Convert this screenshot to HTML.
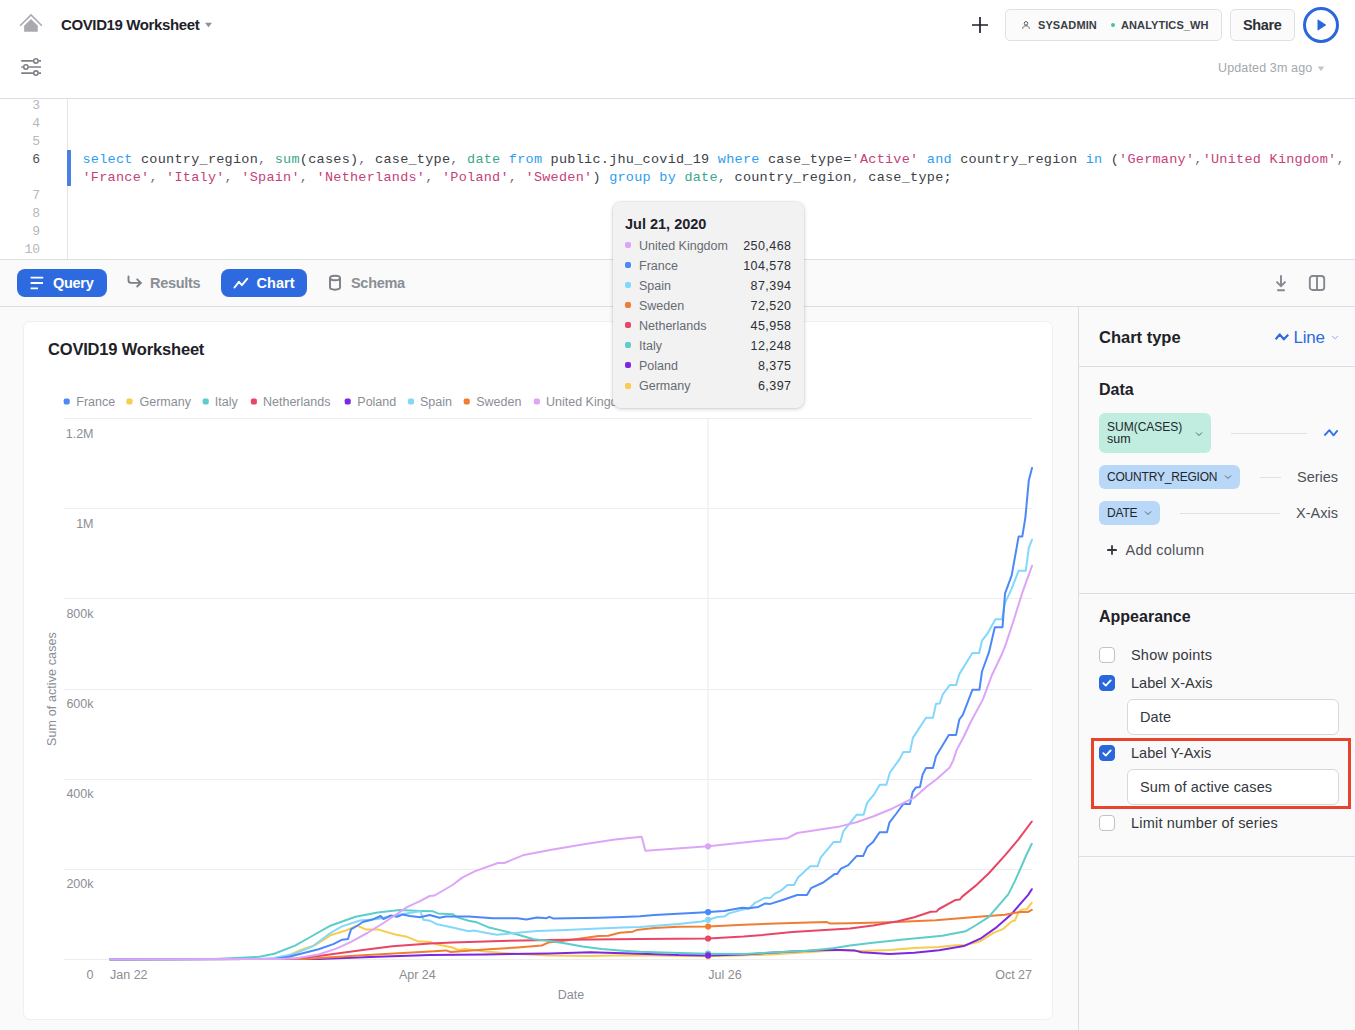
<!DOCTYPE html>
<html lang="en">
<head>
<meta charset="utf-8">
<title>COVID19 Worksheet</title>
<style>
*{box-sizing:border-box;margin:0;padding:0}
html,body{width:1355px;height:1030px;overflow:hidden;background:#fff}
body{position:relative;font-family:"Liberation Sans",sans-serif;color:#1f2329;-webkit-font-smoothing:antialiased}
.abs{position:absolute}
.t{position:absolute;white-space:nowrap;line-height:1}
/* header */
#title{left:61px;top:17px;font-size:15px;font-weight:700;color:#1e2228;letter-spacing:-.38px}
#ctx{left:1005px;top:9px;width:217px;height:32px;border:1px solid #dfe1e5;border-radius:5px;background:#fbfbfb}
#share{left:1230px;top:9px;width:65px;height:32px;border:1px solid #dfe1e5;border-radius:5px;background:#fbfbfb}
#run{left:1303px;top:7px;width:36px;height:36px;border:3px solid #2a67dc;border-radius:50%}
#hdrline{left:0;top:98px;width:1355px;height:1px;background:#dcdee2}
/* editor */
.ln{position:absolute;width:40px;left:0;text-align:right;font-family:"Liberation Mono",monospace;font-size:13px;color:#b4b8c0;line-height:18px}
.code{position:absolute;left:82.5px;font-family:"Liberation Mono",monospace;font-size:13.5px;letter-spacing:.2576px;line-height:18px;white-space:pre;color:#3d4149}
.k{color:#2f9df0}.f{color:#3ba88a}.s{color:#c6417a}.p{color:#6c7380}
/* tabs */
#tabbar{left:0;top:259px;width:1355px;height:48px;background:#fafafa;border-top:1px solid #dcdee2;border-bottom:1px solid #dcdee2}
.tabbtn{position:absolute;top:269px;height:28px;border-radius:8px;background:#2d6ae0}
.tabtxt{position:absolute;top:275.5px;letter-spacing:-.3px;font-size:14.5px;font-weight:700;line-height:1;white-space:nowrap}
/* main */
#main{left:0;top:307px;width:1078px;height:723px;background:#fafafa}
#card{left:23px;top:320.5px;width:1030px;height:699.5px;background:#fff;border-radius:7px;border:1px solid #f0f0f1}
#side{left:1078px;top:307px;width:277px;height:723px;background:#fafafa;border-left:1px solid #dcdee2}
.sh{position:absolute;left:1099px;font-size:16px;font-weight:700;line-height:1;color:#1e2228;white-space:nowrap}
.sline{position:absolute;left:1079px;width:276px;height:1px;background:#dcdee2}
.pill{position:absolute;border-radius:6px;font-size:12.5px;color:#22262c;line-height:1;white-space:nowrap}
.lbl{position:absolute;letter-spacing:.13px;font-size:14.5px;color:#33373e;line-height:1;white-space:nowrap}
.cb{position:absolute;left:1099px;width:16px;height:16px;border-radius:4px;border:1px solid #bfc3c9;background:#fff}
.cb.on{background:#2a67dc;border-color:#2a67dc}
.inp{position:absolute;left:1127px;width:212px;height:36px;border:1px solid #d5d8dc;border-radius:6px;background:#fff}
/* tooltip */
#tip{left:613px;top:201.5px;width:191px;height:206px;background:#f2f2f2;border-radius:8px;box-shadow:0 1px 4px rgba(0,0,0,.18),0 0 0 1px rgba(0,0,0,.04)}
.tr{position:absolute;left:0;width:191px;height:20px;font-size:12.5px;color:#666b73;line-height:20px}
.tr i{position:absolute;left:12px;top:6.3px;width:6px;height:6px;border-radius:2px}
.tr b{position:absolute;left:26px;font-weight:400}
.tr u{position:absolute;right:12.5px;text-decoration:none;color:#2b2f36;letter-spacing:.45px}
</style>
</head>
<body>
<!-- HEADER -->
<svg class="abs" style="left:18px;top:12px" width="26" height="22" viewBox="0 0 26 22"><path d="M2.100 13.700 L13 2.900 L23.900 13.700" fill="none" stroke="#a8aaaf" stroke-width="1.600" stroke-linejoin="miter"/><path d="M13 7 L19.800 13.800 V19.800 H6.100 V13.800 Z" fill="#a8aaaf"/></svg>
<div id="title" class="t">COVID19 Worksheet</div>
<svg class="abs" style="left:204px;top:22px" width="9" height="6" viewBox="0 0 9 6"><path d="M1 0.8h7L4.5 5.2z" fill="#8d9198"/></svg>
<svg class="abs" style="left:20px;top:56px" width="22" height="22" viewBox="0 0 22 22" fill="none" stroke="#7d8087" stroke-width="1.600"><path d="M1.200 4.900h11.700M18.900 4.900h2.100M1.200 11h1.700M8.900 11H21M1.200 17.100h11.700M18.900 17.100h2.100"/><circle cx="15.900" cy="4.900" r="2.200"/><circle cx="5.900" cy="11" r="2.200"/><circle cx="15.900" cy="17.100" r="2.200"/></svg>
<svg class="abs" style="left:971px;top:16px" width="18" height="18" viewBox="0 0 18 18"><path d="M9 1v16M1 9h16" stroke="#1e2228" stroke-width="1.7" fill="none"/></svg>
<div id="ctx" class="abs"></div>
<svg class="abs" style="left:1021px;top:20px" width="10" height="10" viewBox="0 0 12 12" fill="none" stroke="#5b6068" stroke-width="1.2"><circle cx="6" cy="4" r="2.1"/><path d="M2 10.5c.4-2.6 1.9-3.6 4-3.6s3.6 1 4 3.6"/></svg>
<div class="t" style="left:1038px;top:19.5px;font-size:11px;font-weight:700;color:#3a3e46;letter-spacing:.1px">SYSADMIN</div>
<div class="abs" style="left:1111px;top:23px;width:4px;height:4px;border-radius:50%;background:#4cc38f"></div>
<div class="t" style="left:1121px;top:19.5px;font-size:11px;font-weight:700;color:#3a3e46;letter-spacing:.1px">ANALYTICS_WH</div>
<div id="share" class="abs"></div>
<div class="t" style="left:1243px;top:18px;font-size:14.5px;font-weight:700;letter-spacing:-.36px;color:#2b2f36">Share</div>
<div id="run" class="abs"></div>
<svg class="abs" style="left:1316px;top:19px" width="12" height="12" viewBox="0 0 12 12"><path d="M1.5 1.2v9.6c0 .5.5.8.9.5l7.3-4.8c.4-.2.4-.8 0-1L2.4.7c-.4-.3-.9 0-.9.5z" fill="#2a67dc"/></svg>
<div class="t" style="left:1218px;top:62px;font-size:12.5px;letter-spacing:.14px;color:#a3a7ae">Updated 3m ago</div>
<svg class="abs" style="left:1317px;top:65.5px" width="8" height="6" viewBox="0 0 8 6"><path d="M.6.6h6.8L4 5.2z" fill="#c3c6cb"/></svg>
<div id="hdrline" class="abs"></div>

<!-- EDITOR -->
<div class="abs" style="left:67px;top:99px;width:1px;height:160px;background:#e4e5e8"></div>
<div class="ln" style="top:97px">3</div>
<div class="ln" style="top:115px">4</div>
<div class="ln" style="top:133px">5</div>
<div class="ln" style="top:151px;color:#4a4f57">6</div>
<div class="ln" style="top:187px">7</div>
<div class="ln" style="top:205px">8</div>
<div class="ln" style="top:223px">9</div>
<div class="ln" style="top:241px">10</div>
<div class="abs" style="left:67px;top:150px;width:4px;height:36px;background:#4a7fe6"></div>
<div class="code" style="top:151px"><span class="k">select</span> country_region<span class="p">,</span> <span class="f">sum</span>(cases)<span class="p">,</span> case_type<span class="p">,</span> <span class="f">date</span> <span class="k">from</span> public.jhu_covid_19 <span class="k">where</span> case_type=<span class="s">'Active'</span> <span class="k">and</span> country_region <span class="k">in</span> (<span class="s">'Germany'</span><span class="p">,</span><span class="s">'United Kingdom'</span><span class="p">,</span></div>
<div class="code" style="top:169px"><span class="s">'France'</span><span class="p">,</span> <span class="s">'Italy'</span><span class="p">,</span> <span class="s">'Spain'</span><span class="p">,</span> <span class="s">'Netherlands'</span><span class="p">,</span> <span class="s">'Poland'</span><span class="p">,</span> <span class="s">'Sweden'</span>) <span class="k">group by</span> <span class="f">date</span><span class="p">,</span> country_region<span class="p">,</span> case_type;</div>

<!-- TABS -->
<div id="tabbar" class="abs"></div>
<div class="tabbtn" style="left:17px;width:90px"></div>
<svg class="abs" style="left:30px;top:276px" width="14" height="14" viewBox="0 0 14 14"><path d="M.6 1.600h12.600M.6 7h12.400M.6 12.400h7.400" stroke="#fff" stroke-width="1.900"/></svg>
<div class="tabtxt" style="left:53px;color:#fff">Query</div>
<svg class="abs" style="left:127px;top:275px" width="16" height="14" viewBox="0 0 16 14" fill="none" stroke="#7b7f86" stroke-width="1.900" stroke-linecap="round" stroke-linejoin="round"><path d="M1.5 1.5v3.8c0 1.6 1 2.6 2.6 2.6h9.6"/><path d="M10.2 4.3l3.6 3.6-3.6 3.6"/></svg>
<div class="tabtxt" style="left:150px;color:#8a8e95">Results</div>
<div class="tabbtn" style="left:221px;width:86px"></div>
<svg class="abs" style="left:233px;top:276px" width="16" height="14" viewBox="0 0 16 14" fill="none" stroke="#fff" stroke-width="2" stroke-linecap="round" stroke-linejoin="round"><path d="M1.5 11.5l4.4-5.6 3 3.2 5.4-6.4"/></svg>
<div class="tabtxt" style="left:256.5px;color:#fff;letter-spacing:.05px">Chart</div>
<svg class="abs" style="left:328px;top:274px" width="14" height="17" viewBox="0 0 14 17" fill="none" stroke="#7b7f86" stroke-width="1.900"><path d="M2 4v9.600c0 1.200 2.200 2.100 5 2.100s5-.9 5-2.100V4"/><ellipse cx="7" cy="4" rx="5" ry="2.300"/></svg>
<div class="tabtxt" style="left:351px;color:#8a8e95">Schema</div>
<svg class="abs" style="left:1273px;top:274px" width="16" height="18" viewBox="0 0 16 18" fill="none" stroke="#85888f" stroke-width="1.900" stroke-linejoin="miter"><path d="M8 1.200v10.800M3.500 7.700l4.500 4.500 4.500-4.500M4.200 16.300h7.600"/></svg>
<svg class="abs" style="left:1308px;top:274px" width="18" height="18" viewBox="0 0 18 18" fill="none" stroke="#85888f" stroke-width="1.900"><rect x="1.800" y="2" width="14.400" height="14" rx="2.800"/><path d="M9 2v14"/></svg>

<!-- MAIN -->
<div id="main" class="abs"></div>
<div id="card" class="abs"></div>
<div class="t" style="left:48px;top:341px;font-size:16.500px;letter-spacing:-.18px;font-weight:700;color:#1e2228">COVID19 Worksheet</div>
<!--CHART-->
<svg class="abs" style="left:0;top:307px" width="1078" height="723" viewBox="0 307 1078 723">
<path d="M64 418.5H1032" stroke="#ededef" stroke-width="1"/>
<path d="M64 508.5H1032" stroke="#ededef" stroke-width="1"/>
<path d="M64 598.5H1032" stroke="#ededef" stroke-width="1"/>
<path d="M64 689.5H1032" stroke="#ededef" stroke-width="1"/>
<path d="M64 779.5H1032" stroke="#ededef" stroke-width="1"/>
<path d="M64 869.5H1032" stroke="#ededef" stroke-width="1"/>
<path d="M64 959.5H1032" stroke="#ededef" stroke-width="1"/>
<path d="M708 419V959" stroke="#f4f4f5" stroke-width="2"/>
<path d="M110.0 959.2 L270.0 958.9 L286.0 956.7 L300.8 950.0 L315.6 944.9 L330.4 935.3 L345.0 930.8 L357.0 925.7 L365.8 929.4 L377.6 929.4 L395.3 934.5 L407.0 936.8 L417.5 941.2 L430.0 941.9 L436.2 944.2 L452.5 947.5 L458.0 949.9 L465.5 949.0 L485.0 951.5 L517.4 954.0 L550.0 955.6 L590.5 956.0 L614.8 955.4 L640.0 955.2 L708.3 956.3 L776.0 954.3 L840.0 949.9 L861.5 951.1 L889.5 949.9 L914.3 948.1 L939.0 946.9 L955.6 945.3 L965.5 945.0 L980.3 941.2 L993.5 932.9 L1003.4 928.8 L1011.7 921.4 L1015.0 920.5 L1018.3 912.3 L1021.6 909.8 L1026.6 909.3 L1031.8 902.7" fill="none" stroke="#f8cc4c" stroke-width="2" stroke-linejoin="round" stroke-linecap="round"/>
<path d="M110.0 959.2 L300.0 959.1 L318.6 958.9 L377.6 956.7 L430.0 954.9 L485.0 954.4 L550.0 953.6 L590.5 952.3 L614.8 953.1 L640.0 953.8 L678.7 955.1 L708.3 955.4 L743.7 954.4 L792.4 951.5 L824.8 949.9 L840.0 949.9 L854.9 950.6 L861.5 952.2 L889.5 953.9 L914.3 952.7 L939.0 950.2 L963.8 946.1 L980.3 938.7 L996.8 927.1 L1011.7 913.9 L1021.6 902.4 L1028.2 894.9 L1031.8 889.2" fill="none" stroke="#7c28e2" stroke-width="2" stroke-linejoin="round" stroke-linecap="round"/>
<path d="M110.0 959.2 L290.0 959.1 L303.8 958.9 L362.8 955.2 L430.0 951.5 L446.0 950.4 L450.8 952.0 L485.0 949.6 L517.4 947.5 L541.8 945.5 L548.3 942.6 L566.0 940.5 L582.4 938.2 L598.6 936.1 L608.3 935.8 L619.7 932.8 L632.7 931.7 L636.5 930.1 L654.4 928.0 L678.7 926.8 L708.3 926.5 L743.7 924.7 L776.0 923.6 L808.6 922.6 L826.5 922.0 L830.5 923.6 L850.0 923.3 L889.5 922.2 L935.8 920.2 L972.0 917.2 L1005.0 914.7 L1020.0 911.9 L1028.2 911.9 L1031.8 909.8" fill="none" stroke="#ef7e33" stroke-width="2" stroke-linejoin="round" stroke-linecap="round"/>
<path d="M110.0 959.2 L280.0 959.1 L296.0 958.6 L318.6 956.0 L362.8 950.0 L392.4 946.3 L430.0 943.6 L452.5 942.6 L501.0 941.0 L566.0 939.8 L640.0 939.0 L708.3 938.5 L743.7 936.6 L759.9 935.3 L792.4 932.0 L824.8 930.1 L850.0 928.5 L873.0 925.5 L897.8 921.3 L914.3 917.2 L930.8 911.8 L936.6 911.4 L939.0 909.0 L955.6 899.9 L959.7 899.6 L962.2 896.6 L975.4 885.9 L988.6 873.5 L1005.0 855.3 L1018.3 839.6 L1031.8 821.5" fill="none" stroke="#e84666" stroke-width="2" stroke-linejoin="round" stroke-linecap="round"/>
<path d="M110.0 959.2 L215.0 959.0 L230.0 958.2 L259.5 956.7 L274.3 953.7 L295.0 945.6 L306.8 939.0 L330.4 925.7 L355.5 916.8 L377.6 912.4 L399.7 909.9 L420.0 910.9 L433.0 911.3 L437.9 913.4 L452.5 914.2 L457.3 917.4 L468.7 920.7 L476.8 922.3 L488.2 927.2 L501.2 930.4 L517.4 934.5 L533.7 939.3 L549.9 941.0 L566.0 943.4 L582.4 946.6 L601.8 949.1 L623.0 950.7 L640.0 951.8 L670.6 952.8 L708.3 953.7 L743.7 954.0 L776.0 952.3 L808.6 950.7 L833.0 948.3 L850.0 945.6 L873.0 942.8 L906.0 939.2 L942.4 935.7 L965.5 931.3 L975.4 925.5 L988.6 917.2 L998.5 905.7 L1008.4 894.1 L1015.0 880.9 L1021.6 866.0 L1026.6 854.5 L1031.8 843.8" fill="none" stroke="#5dcdca" stroke-width="2" stroke-linejoin="round" stroke-linecap="round"/>
<path d="M110.0 959.2 L260.0 959.1 L274.0 958.0 L295.0 953.7 L312.7 946.3 L330.4 933.0 L342.0 926.4 L360.0 920.5 L377.6 919.0 L399.7 914.6 L420.4 911.3 L423.4 919.8 L429.7 920.7 L436.2 923.9 L452.5 927.5 L468.7 931.2 L473.6 930.4 L488.2 933.2 L497.0 934.8 L517.4 932.8 L536.9 930.9 L566.0 930.0 L598.6 928.5 L623.0 927.6 L640.0 926.9 L678.7 923.9 L701.4 921.5 L708.3 919.8 L717.7 916.9 L724.2 916.6 L729.0 913.4 L743.7 909.3 L748.5 909.0 L755.0 902.8 L764.8 897.9 L770.4 897.9 L774.5 893.9 L781.0 890.6 L787.5 884.9 L794.0 884.9 L798.0 877.6 L810.2 866.3 L817.5 866.3 L820.8 857.3 L833.8 841.9 L840.3 841.9 L843.3 831.4 L856.5 814.8 L863.6 814.8 L867.1 802.9 L874.5 793.8 L879.7 784.8 L886.4 784.8 L889.9 772.5 L899.8 758.9 L903.3 751.9 L910.0 751.9 L912.9 737.9 L926.0 717.8 L933.0 717.8 L936.0 703.8 L939.7 703.5 L942.7 694.5 L949.7 685.1 L956.1 685.1 L959.3 674.1 L972.4 653.0 L979.2 653.0 L982.0 640.6 L987.6 633.4 L995.4 619.2 L1002.0 619.2 L1005.0 602.9 L1011.7 588.6 L1018.6 570.7 L1025.8 570.7 L1028.8 547.8 L1032.0 539.7" fill="none" stroke="#82d8fb" stroke-width="2" stroke-linejoin="round" stroke-linecap="round"/>
<path d="M110.0 959.2 L275.0 959.1 L289.0 956.7 L303.8 953.0 L318.6 949.3 L333.3 944.1 L342.2 939.7 L348.0 939.0 L351.0 929.4 L358.4 925.0 L362.8 922.0 L371.7 919.8 L380.6 916.0 L383.5 919.0 L390.9 915.4 L396.8 916.8 L402.7 914.6 L410.0 916.0 L420.0 917.2 L429.7 915.0 L439.5 917.7 L446.0 916.6 L468.7 916.6 L493.0 918.2 L517.4 918.2 L526.3 919.4 L536.9 917.4 L546.6 918.2 L549.4 916.8 L553.0 918.4 L582.4 917.9 L598.6 917.7 L623.0 916.9 L640.0 916.3 L654.4 915.0 L701.4 912.5 L708.3 912.1 L724.2 910.9 L742.0 907.7 L748.5 908.2 L758.3 906.9 L764.8 903.6 L770.4 903.9 L782.6 900.0 L797.2 895.0 L807.0 895.0 L811.0 888.2 L823.2 882.5 L834.6 874.1 L837.0 874.1 L841.0 868.7 L848.3 865.2 L856.5 856.1 L863.1 856.1 L867.2 847.1 L873.0 842.1 L879.6 832.2 L887.0 832.2 L889.5 822.3 L896.0 814.0 L903.3 804.0 L910.0 804.0 L912.6 792.1 L916.0 787.4 L920.0 786.9 L922.6 774.6 L926.0 768.0 L933.0 768.0 L936.0 756.3 L948.8 734.9 L956.1 734.9 L959.3 719.5 L962.8 714.8 L972.4 689.8 L979.4 689.8 L982.0 671.5 L989.0 652.2 L994.8 627.3 L1002.5 627.3 L1005.0 593.7 L1011.7 575.4 L1018.6 536.6 L1022.3 536.6 L1025.4 517.3 L1028.8 480.6 L1032.0 467.9" fill="none" stroke="#4c88f8" stroke-width="2" stroke-linejoin="round" stroke-linecap="round"/>
<path d="M110.0 959.2 L280.0 959.1 L296.4 958.2 L318.6 954.5 L336.3 948.6 L351.0 941.9 L367.3 933.0 L385.0 922.0 L407.0 907.2 L420.0 901.2 L429.7 896.0 L434.6 895.5 L452.5 885.0 L462.2 877.6 L475.2 871.1 L498.0 863.0 L504.4 863.0 L524.0 854.9 L550.0 850.0 L582.4 844.4 L615.0 839.5 L641.7 836.7 L645.4 850.8 L708.3 846.3 L759.9 840.8 L787.5 838.2 L797.2 833.0 L840.0 826.4 L856.5 822.3 L873.0 816.5 L892.0 808.7 L914.7 797.3 L926.9 786.5 L936.5 779.3 L949.7 767.6 L953.1 760.6 L956.6 750.1 L963.6 737.0 L970.6 722.2 L982.9 699.4 L991.6 675.8 L1002.0 654.0 L1006.0 643.6 L1014.0 619.2 L1022.3 592.7 L1032.0 565.8" fill="none" stroke="#dca5f7" stroke-width="2" stroke-linejoin="round" stroke-linecap="round"/>
<circle cx="708.1" cy="846.3" r="3.1" fill="#dca5f7"/>
<circle cx="708.1" cy="912.1" r="3.1" fill="#4c88f8"/>
<circle cx="708.1" cy="919.8" r="3.1" fill="#82d8fb"/>
<circle cx="708.1" cy="926.5" r="3.1" fill="#ef7e33"/>
<circle cx="708.1" cy="938.5" r="3.1" fill="#e84666"/>
<circle cx="708.1" cy="953.7" r="3.1" fill="#5dcdca"/>
<circle cx="708.1" cy="956.3" r="3.1" fill="#f8cc4c"/>
<circle cx="708.1" cy="955.4" r="3.1" fill="#7c28e2"/>
<text x="93.5" y="978.5" text-anchor="end" style="font-family:'Liberation Sans',sans-serif;font-size:12.5px;fill:#8a8e95">0</text>
<text x="93.5" y="888.3" text-anchor="end" style="font-family:'Liberation Sans',sans-serif;font-size:12.5px;fill:#8a8e95">200k</text>
<text x="93.5" y="798.2" text-anchor="end" style="font-family:'Liberation Sans',sans-serif;font-size:12.5px;fill:#8a8e95">400k</text>
<text x="93.5" y="708.0" text-anchor="end" style="font-family:'Liberation Sans',sans-serif;font-size:12.5px;fill:#8a8e95">600k</text>
<text x="93.5" y="617.8" text-anchor="end" style="font-family:'Liberation Sans',sans-serif;font-size:12.5px;fill:#8a8e95">800k</text>
<text x="93.5" y="527.6" text-anchor="end" style="font-family:'Liberation Sans',sans-serif;font-size:12.5px;fill:#8a8e95">1M</text>
<text x="93.5" y="437.5" text-anchor="end" style="font-family:'Liberation Sans',sans-serif;font-size:12.5px;fill:#8a8e95">1.2M</text>
<text x="110" y="978.500" style="font-family:'Liberation Sans',sans-serif;font-size:12.5px;fill:#8a8e95">Jan 22</text>
<text x="417.300" y="978.500" text-anchor="middle" style="font-family:'Liberation Sans',sans-serif;font-size:12.5px;fill:#8a8e95">Apr 24</text>
<text x="725" y="978.500" text-anchor="middle" style="font-family:'Liberation Sans',sans-serif;font-size:12.5px;fill:#8a8e95">Jul 26</text>
<text x="1032" y="978.500" text-anchor="end" style="font-family:'Liberation Sans',sans-serif;font-size:12.5px;fill:#8a8e95">Oct 27</text>
<text x="571" y="998.500" text-anchor="middle" style="font-family:'Liberation Sans',sans-serif;font-size:12.5px;fill:#8a8e95">Date</text>
<text transform="translate(56 689) rotate(-90)" text-anchor="middle" style="font-family:'Liberation Sans',sans-serif;font-size:12.5px;fill:#8a8e95;font-size:12.500px;letter-spacing:.1px">Sum of active cases</text>
<rect x="63.7" y="398.500" width="6" height="6" rx="1.700" fill="#4c88f8"/>
<text x="76.3" y="406" style="font-family:'Liberation Sans',sans-serif;font-size:12.5px;fill:#8a8e95">France</text>
<rect x="126.5" y="398.500" width="6" height="6" rx="1.700" fill="#f8cc4c"/>
<text x="139.5" y="406" style="font-family:'Liberation Sans',sans-serif;font-size:12.5px;fill:#8a8e95">Germany</text>
<rect x="202.7" y="398.500" width="6" height="6" rx="1.700" fill="#5dcdca"/>
<text x="214.8" y="406" style="font-family:'Liberation Sans',sans-serif;font-size:12.5px;fill:#8a8e95">Italy</text>
<rect x="250.9" y="398.500" width="6" height="6" rx="1.700" fill="#e84666"/>
<text x="263.0" y="406" style="font-family:'Liberation Sans',sans-serif;font-size:12.5px;fill:#8a8e95">Netherlands</text>
<rect x="344.7" y="398.500" width="6" height="6" rx="1.700" fill="#7c28e2"/>
<text x="357.3" y="406" style="font-family:'Liberation Sans',sans-serif;font-size:12.5px;fill:#8a8e95">Poland</text>
<rect x="408.0" y="398.500" width="6" height="6" rx="1.700" fill="#82d8fb"/>
<text x="420.0" y="406" style="font-family:'Liberation Sans',sans-serif;font-size:12.5px;fill:#8a8e95">Spain</text>
<rect x="463.7" y="398.500" width="6" height="6" rx="1.700" fill="#ef7e33"/>
<text x="476.2" y="406" style="font-family:'Liberation Sans',sans-serif;font-size:12.5px;fill:#8a8e95">Sweden</text>
<rect x="533.9" y="398.500" width="6" height="6" rx="1.700" fill="#dca5f7"/>
<text x="546.0" y="406" style="font-family:'Liberation Sans',sans-serif;font-size:12.5px;fill:#8a8e95">United Kingdom</text>
</svg>
<!--/CHART-->

<!-- SIDE -->
<div id="side" class="abs"></div>
<!--SIDE-->
<div class="sh" style="top:329px;font-size:16.5px">Chart type</div>
<svg class="abs" style="left:1274px;top:331px" width="16" height="12" viewBox="0 0 16 12" fill="none" stroke="#2d6ae0" stroke-width="2.200" stroke-linejoin="round"><path d="M1.700 8.200L5.700 3.400 9.800 8.300 14.200 3.700"/></svg>
<div class="t" style="left:1293.500px;top:328.500px;font-size:17px;letter-spacing:-.2px;color:#2d6ae0">Line</div>
<svg class="abs" style="left:1331px;top:334px" width="8" height="6" viewBox="0 0 8 6" fill="none" stroke="#8eaef0" stroke-width="1"><path d="M1.100 2l3 2.800 2.900-2.800"/></svg>
<div class="sline" style="top:366px"></div>
<div class="sh" style="top:382px">Data</div>
<div class="pill" style="left:1099px;top:413px;width:112px;height:40px;background:#c0ede0"></div>
<div class="t" style="left:1107px;top:421px;font-size:12px;color:#22262c">SUM(CASES)</div>
<div class="t" style="left:1107px;top:432.500px;font-size:12.500px;color:#22262c">sum</div>
<svg class="abs" style="left:1195px;top:431px" width="8" height="6" viewBox="0 0 8 6" fill="none" stroke="#5b6068" stroke-width="1"><path d="M1 1.500l3 3 3-3"/></svg>
<div class="abs" style="left:1231px;top:433px;width:76px;height:1px;background:#dfe0e3"></div>
<svg class="abs" style="left:1323px;top:427px" width="16" height="12" viewBox="0 0 16 12" fill="none" stroke="#3572ec" stroke-width="1.900" stroke-linejoin="round"><path d="M1.400 8.500L6.400 3.200 10.500 8.300 14.600 3.400"/></svg>
<div class="pill" style="left:1099px;top:465px;width:141px;height:24px;background:#b9d8f7"></div>
<div class="t" style="left:1107px;top:471px;font-size:12px;letter-spacing:-.2px;color:#22262c">COUNTRY_REGION</div>
<svg class="abs" style="left:1224px;top:474px" width="8" height="6" viewBox="0 0 8 6" fill="none" stroke="#5b6068" stroke-width="1"><path d="M1 1.500l3 3 3-3"/></svg>
<div class="abs" style="left:1260px;top:477px;width:21px;height:1px;background:#dfe0e3"></div>
<div class="t" style="left:1297px;top:469.500px;font-size:14.500px;color:#4d5159">Series</div>
<div class="pill" style="left:1099px;top:501px;width:61px;height:24px;background:#b9d8f7"></div>
<div class="t" style="left:1107px;top:507px;font-size:12px;letter-spacing:-.2px;color:#22262c">DATE</div>
<svg class="abs" style="left:1144px;top:510px" width="8" height="6" viewBox="0 0 8 6" fill="none" stroke="#5b6068" stroke-width="1"><path d="M1 1.500l3 3 3-3"/></svg>
<div class="abs" style="left:1180px;top:513px;width:100px;height:1px;background:#dfe0e3"></div>
<div class="t" style="left:1296px;top:505.500px;font-size:14.500px;color:#4d5159">X-Axis</div>
<svg class="abs" style="left:1107px;top:544.500px" width="10" height="10" viewBox="0 0 10 10"><path d="M5 .2v9.600M.2 5h9.600" stroke="#33373e" stroke-width="1.800" fill="none"/></svg>
<div class="t" style="left:1125.500px;top:542.500px;font-size:14.500px;letter-spacing:.23px;color:#4d5159">Add column</div>
<div class="sline" style="top:593px"></div>
<div class="sh" style="top:608.500px">Appearance</div>
<div class="cb" style="top:647px"></div>
<div class="lbl" style="left:1131px;top:648px;letter-spacing:.2px">Show points</div>
<div class="cb on" style="top:675px"></div>
<svg class="abs" style="left:1102px;top:679px" width="10" height="8" viewBox="0 0 10 8" fill="none" stroke="#fff" stroke-width="1.800" stroke-linecap="round" stroke-linejoin="round"><path d="M1.300 4.200l2.500 2.400 4.900-5.200"/></svg>
<div class="lbl" style="left:1131px;top:676px;letter-spacing:0">Label X-Axis</div>
<div class="inp" style="top:699px"></div>
<div class="lbl" style="left:1140px;top:710px">Date</div>
<div class="abs" style="left:1090.500px;top:738px;width:260px;height:70.500px;border:3px solid #e8432d"></div>
<div class="cb on" style="top:745px"></div>
<svg class="abs" style="left:1102px;top:749px" width="10" height="8" viewBox="0 0 10 8" fill="none" stroke="#fff" stroke-width="1.800" stroke-linecap="round" stroke-linejoin="round"><path d="M1.300 4.200l2.500 2.400 4.900-5.200"/></svg>
<div class="lbl" style="left:1131px;top:746px;letter-spacing:.03px">Label Y-Axis</div>
<div class="inp" style="top:769px"></div>
<div class="lbl" style="left:1140px;top:780px">Sum of active cases</div>
<div class="cb" style="top:815px"></div>
<div class="lbl" style="left:1131px;top:816px;letter-spacing:.2px">Limit number of series</div>
<div class="sline" style="top:856px"></div>
<!--/SIDE-->

<!-- TOOLTIP -->
<!--TIP-->
<div id="tip" class="abs">
<div class="t" style="left:12px;top:15px;font-size:14.500px;font-weight:700;color:#1e2228">Jul 21, 2020</div>
<div class="tr" style="top:34.4px"><i style="background:#dca5f7"></i><b>United Kingdom</b><u>250,468</u></div>
<div class="tr" style="top:54.5px"><i style="background:#4c88f8"></i><b>France</b><u>104,578</u></div>
<div class="tr" style="top:74.5px"><i style="background:#82d8fb"></i><b>Spain</b><u>87,394</u></div>
<div class="tr" style="top:94.6px"><i style="background:#ef7e33"></i><b>Sweden</b><u>72,520</u></div>
<div class="tr" style="top:114.6px"><i style="background:#e84666"></i><b>Netherlands</b><u>45,958</u></div>
<div class="tr" style="top:134.7px"><i style="background:#5dcdca"></i><b>Italy</b><u>12,248</u></div>
<div class="tr" style="top:154.7px"><i style="background:#7c28e2"></i><b>Poland</b><u>8,375</u></div>
<div class="tr" style="top:174.8px"><i style="background:#f8cc4c"></i><b>Germany</b><u>6,397</u></div>
</div>
<!--/TIP-->
</body>
</html>
